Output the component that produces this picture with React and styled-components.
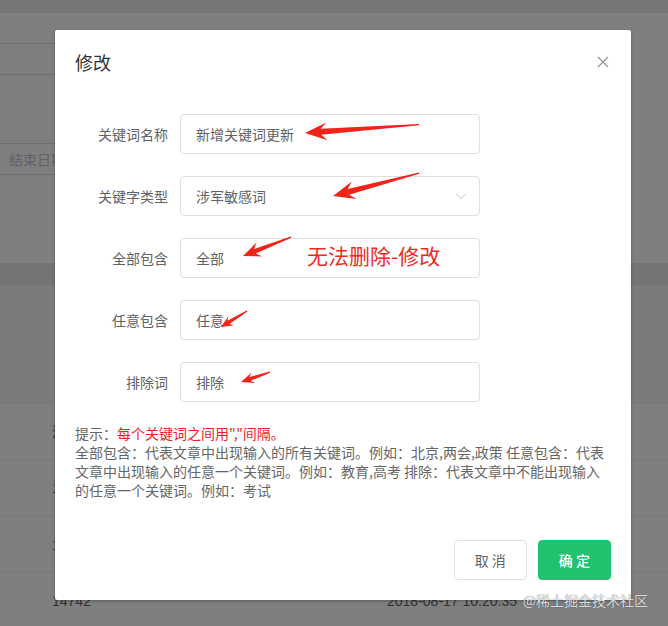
import React from 'react';
import styled, { createGlobalStyle } from 'styled-components';

const GlobalStyle = createGlobalStyle`
  html, body { margin: 0; padding: 0; }
  body {
    width: 668px;
    height: 626px;
    overflow: hidden;
    background: #fff;
    font-family: "Noto Sans CJK SC", "Noto Sans", sans-serif;
  }
  * { box-sizing: border-box; }
`;

/* ---------- background page ---------- */
const Page = styled.div`
  position: relative;
  width: 668px;
  height: 626px;
  overflow: hidden;
  background: #fff;
  display: flex;
  flex-direction: column;
`;

const TopStrip = styled.div`
  flex: none;
  height: 13px;
  background: #ececec;
`;

const FilterArea = styled.div`
  flex: none;
  height: 250px;
  padding-top: 30px;
  display: flex;
  flex-direction: column;
  gap: 68px;
`;

const FilterField = styled.div`
  width: 260px;
  height: 32px;
  margin-left: -20px;
  padding-left: 28px;
  border: 1px solid #dcdfe6;
  border-radius: 4px;
  color: #c0c4cc;
  font-size: 14px;
  line-height: 30px;
`;

const SectionGap = styled.div`
  flex: none;
  height: 22px;
  background: #e8e8e8;
`;

const TableHead = styled.div`
  flex: none;
  height: 118px;
  background: #f6f6f6;
  border-bottom: 1px solid #ebeef5;
`;

const TableRow = styled.div`
  flex: none;
  height: ${p => p.$h}px;
  display: flex;
  align-items: center;
  border-bottom: 1px solid #ebeef5;
  font-family: "Liberation Sans", "Noto Sans CJK SC", sans-serif;
  font-size: 14px;
  color: #606266;
`;

const IdCell = styled.div`
  width: 387px;
  padding-left: 52px;
`;

const DateCell = styled.div`
  flex: 1;
`;

/* ---------- modal ---------- */
const Mask = styled.div`
  position: absolute;
  inset: 0;
  background: rgba(0, 0, 0, 0.5);
`;

const DialogWrapper = styled.div`
  position: absolute;
  inset: 0;
  padding: 30px 0 0 55px;
`;

const Dialog = styled.div`
  width: 576px;
  background: #fff;
  border-radius: 2px;
  box-shadow: 0 1px 3px rgba(0, 0, 0, 0.3);
`;

const DialogHeader = styled.div`
  display: flex;
  align-items: center;
  justify-content: space-between;
  padding: 20px 20px 10px;
`;

const Title = styled.span`
  font-size: 18px;
  line-height: 24px;
  color: #303133;
`;

const CloseButton = styled.button`
  width: 16px;
  height: 16px;
  padding: 0;
  border: 0;
  background: none;
  display: flex;
  align-items: center;
  justify-content: center;
`;

const DialogBody = styled.div`
  padding: 30px 20px;
`;

const FormRow = styled.div`
  display: flex;
  align-items: center;
  height: 40px;
  margin-bottom: 22px;
`;

const Label = styled.label`
  width: 105px;
  padding-right: 12px;
  text-align: right;
  font-size: 14px;
  color: #606266;
`;

const InputBox = styled.div`
  width: 300px;
  height: 40px;
  padding: 0 12px 0 15px;
  border: 1px solid #dcdfe6;
  border-radius: 4px;
  display: flex;
  align-items: center;
  justify-content: space-between;
  font-size: 14px;
  color: #606266;
`;

const Hint = styled.div`
  margin-top: 1px;
  font-size: 14px;
  color: #666;
`;

const HintLine = styled.div`
  height: 19px;
  line-height: 19px;
  white-space: nowrap;
`;

const HintRed = styled.span`
  color: #ee1d1d;
`;

const DialogFooter = styled.div`
  display: flex;
  justify-content: flex-end;
  gap: 11px;
  padding: 10px 20px 20px;
`;

const Button = styled.button`
  height: 40px;
  padding: 0 20px;
  border-radius: 4px;
  font-family: "Noto Sans CJK SC", sans-serif;
  font-size: 14px;
  border: 1px solid ${p => (p.$primary ? '#1fc26e' : '#dcdfe6')};
  background: ${p => (p.$primary ? '#1fc26e' : '#fff')};
  color: ${p => (p.$primary ? '#fff' : '#606266')};
  font-weight: ${p => (p.$primary ? 500 : 400)};
`;

/* ---------- annotations ---------- */
const AnnotationLayer = styled.svg`
  position: absolute;
  left: 0;
  top: 0;
  pointer-events: none;
`;

const AnnotationText = styled.div`
  position: absolute;
  left: 307px;
  top: 244px;
  font-size: 21px;
  line-height: 22px;
  color: #ee2a1f;
`;

const Watermark = styled.div`
  position: absolute;
  right: 20px;
  top: 590px;
  font-size: 14px;
  line-height: 20px;
  color: rgba(240, 240, 240, 0.9);
  text-shadow: 0 0 1px rgba(0, 0, 0, 0.6);
`;

function arrowPoints(tip, tail, head, hw, sw) {
  const [tx, ty] = tip;
  const dx = tail[0] - tx;
  const dy = tail[1] - ty;
  const len = Math.hypot(dx, dy);
  const ux = dx / len;
  const uy = dy / len;
  const nx = -uy;
  const ny = ux;
  const p = (a, b) => `${(tx + ux * a + nx * b).toFixed(1)},${(ty + uy * a + ny * b).toFixed(1)}`;
  return [
    p(0, 0),
    p(head * 1.1, hw),
    p(head * 0.8, sw),
    p(len, 0.7),
    p(len, -0.5),
    p(head * 0.8, -sw),
    p(head * 1.1, -hw),
  ].join(' ');
}

const arrows = [
  { tip: [305, 133], tail: [419, 124.5], head: 20, hw: 9, sw: 3 },
  { tip: [333, 196], tail: [419, 173], head: 20, hw: 9, sw: 3 },
  { tip: [243, 256], tail: [291, 237], head: 16, hw: 7.5, sw: 2.5 },
  { tip: [221, 327], tail: [247, 311], head: 11, hw: 5.5, sw: 2 },
  { tip: [241, 382], tail: [270, 372], head: 12, hw: 5.5, sw: 2 },
];

const fields = [
  { label: '关键词名称', value: '新增关键词更新' },
  { label: '关键字类型', value: '涉军敏感词', select: true },
  { label: '全部包含', value: '全部' },
  { label: '任意包含', value: '任意' },
  { label: '排除词', value: '排除' },
];

const hintLines = [
  '全部包含：代表文章中出现输入的所有关键词。例如：北京,两会,政策 任意包含：代表',
  '文章中出现输入的任意一个关键词。例如：教育,高考 排除：代表文章中不能出现输入',
  '的任意一个关键词。例如：考试',
];

const rows = [
  { id: '涉', date: '', h: 57 },
  { id: '1', date: '', h: 57 },
  { id: '1', date: '', h: 56 },
  { id: '14742', date: '2018-08-17 10:20:35', h: 57 },
];

export default function App() {
  return (
    <>
      <GlobalStyle />
      <Page>
        <TopStrip />
        <FilterArea>
          <FilterField />
          <FilterField>结束日期</FilterField>
        </FilterArea>
        <SectionGap />
        <TableHead />
        {rows.map((r, i) => (
          <TableRow key={i} $h={r.h}>
            <IdCell>{r.id}</IdCell>
            <DateCell>{r.date}</DateCell>
          </TableRow>
        ))}

        <Mask />
        <DialogWrapper>
          <Dialog>
            <DialogHeader>
              <Title>修改</Title>
              <CloseButton aria-label="关闭">
                <svg width="12" height="12" viewBox="0 0 12 12">
                  <path d="M1 1 L11 11 M11 1 L1 11" stroke="#909399" strokeWidth="1.2" fill="none" />
                </svg>
              </CloseButton>
            </DialogHeader>
            <DialogBody>
              {fields.map(f => (
                <FormRow key={f.label}>
                  <Label>{f.label}</Label>
                  <InputBox>
                    <span>{f.value}</span>
                    {f.select && (
                      <svg width="12" height="12" viewBox="0 0 12 12">
                        <path d="M1.5 4 L6 8.5 L10.5 4" stroke="#c0c4cc" strokeWidth="1" fill="none" />
                      </svg>
                    )}
                  </InputBox>
                </FormRow>
              ))}
              <Hint>
                <HintLine>
                  提示：<HintRed>每个关键词之间用","间隔。</HintRed>
                </HintLine>
                {hintLines.map(line => (
                  <HintLine key={line}>{line}</HintLine>
                ))}
              </Hint>
            </DialogBody>
            <DialogFooter>
              <Button>取 消</Button>
              <Button $primary>确 定</Button>
            </DialogFooter>
          </Dialog>
        </DialogWrapper>

        <AnnotationLayer width="668" height="626" viewBox="0 0 668 626">
          {arrows.map((a, i) => (
            <polygon key={i} points={arrowPoints(a.tip, a.tail, a.head, a.hw, a.sw)} fill="#f0241b" />
          ))}
        </AnnotationLayer>
        <AnnotationText>无法删除-修改</AnnotationText>
        <Watermark>@稀土掘金技术社区</Watermark>
      </Page>
    </>
  );
}
